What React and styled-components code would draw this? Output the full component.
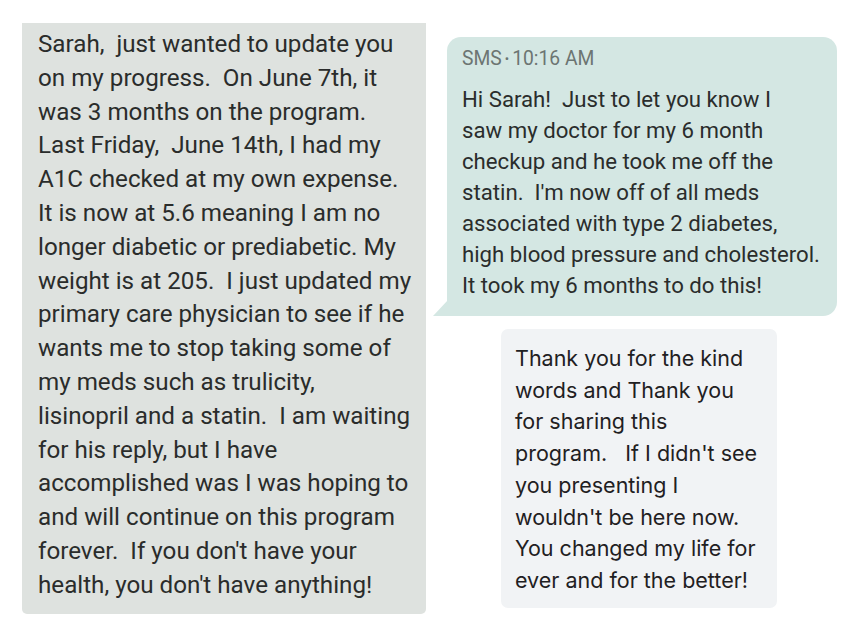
import React from 'react'
import styled, { createGlobalStyle } from 'styled-components'

const GlobalStyle = createGlobalStyle`
  html, body {
    margin: 0;
    padding: 0;
    background: #ffffff;
  }
`;

const Page = styled.div`
  width: 857px;
  height: 630px;
  display: flex;
  align-items: flex-start;
  padding: 23px 0 0 22px;
  box-sizing: border-box;
  background: #ffffff;
  overflow: hidden;
`;

const LeftBubble = styled.div`
  width: 404px;
  height: 591px;
  box-sizing: border-box;
  padding: 5px 0 0 16px;
  background: #dee2df;
  border-radius: 0 0 5px 5px;
  font-family: Roboto, "Liberation Sans", sans-serif;
  font-size: 24.2px;
  line-height: 33.8px;
  color: #2a2c2b;
`;

const Column = styled.div`
  display: flex;
  flex-direction: column;
  align-items: flex-start;
  margin-left: 7px;
  padding-top: 14px;
`;

const SmsBubble = styled.div`
  position: relative;
  width: 390px;
  height: 279px;
  margin-left: 14px;
  box-sizing: border-box;
  padding: 10px 0 0 15px;
  background: #d4e7e3;
  border-radius: 14px 14px 14px 0;
  font-family: Roboto, "Liberation Sans", sans-serif;
  color: #2a2d2c;

  &::before {
    content: '';
    position: absolute;
    left: -14px;
    bottom: 0;
    width: 15px;
    height: 16px;
    background: #d4e7e3;
    clip-path: polygon(100% 0, 100% 100%, 0 100%);
  }
`;

const Meta = styled.div`
  font-size: 19.3px;
  line-height: 24px;
  color: #6c7572;
  margin-bottom: 13px;
  white-space: pre;
`;

const Dot = styled.span`
  font-size: 13px;
  vertical-align: 2px;
  padding: 0 3px;
`;

const SmsText = styled.div`
  font-size: 22.2px;
  line-height: 31px;
`;

const ReplyBubble = styled.div`
  width: 276px;
  height: 279px;
  margin: 13px 0 0 68px;
  box-sizing: border-box;
  padding: 14px 0 0 14px;
  background: #f1f3f5;
  border-radius: 7px;
  font-family: Inter, "Liberation Sans", sans-serif;
  font-size: 21.5px;
  line-height: 31.7px;
  color: #1f2022;
`;

const Line = styled.div`
  white-space: pre;
`;

const leftLines = [
  'Sarah,  just wanted to update you',
  'on my progress.  On June 7th, it',
  'was 3 months on the program.',
  'Last Friday,  June 14th, I had my',
  'A1C checked at my own expense.',
  'It is now at 5.6 meaning I am no',
  'longer diabetic or prediabetic. My',
  'weight is at 205.  I just updated my',
  'primary care physician to see if he',
  'wants me to stop taking some of',
  'my meds such as trulicity,',
  'lisinopril and a statin.  I am waiting',
  'for his reply, but I have',
  'accomplished was I was hoping to',
  'and will continue on this program',
  "forever.  If you don't have your",
  "health, you don't have anything!",
];

const smsLines = [
  'Hi Sarah!  Just to let you know I',
  'saw my doctor for my 6 month',
  'checkup and he took me off the',
  "statin.  I'm now off of all meds",
  'associated with type 2 diabetes,',
  'high blood pressure and cholesterol.',
  'It took my 6 months to do this!',
];

const replyLines = [
  'Thank you for the kind',
  'words and Thank you',
  'for sharing this',
  "program.   If I didn't see",
  'you presenting I',
  "wouldn't be here now.",
  'You changed my life for',
  'ever and for the better!',
];

const App = () => {
  return (
    <>
      <GlobalStyle />
      <Page>
        <LeftBubble>
          {leftLines.map((l, i) => <Line key={i}>{l}</Line>)}
        </LeftBubble>
        <Column>
          <SmsBubble>
            <Meta>SMS<Dot>•</Dot>10:16 AM</Meta>
            <SmsText>
              {smsLines.map((l, i) => <Line key={i}>{l}</Line>)}
            </SmsText>
          </SmsBubble>
          <ReplyBubble>
            {replyLines.map((l, i) => <Line key={i}>{l}</Line>)}
          </ReplyBubble>
        </Column>
      </Page>
    </>
  )
}

export default App
